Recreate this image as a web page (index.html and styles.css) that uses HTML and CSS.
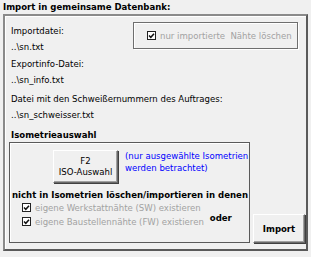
FILE: index.html
```html
<!DOCTYPE html>
<html>
<head>
<meta charset="utf-8">
<link rel="stylesheet" href="styles.css">
</head>
<body>
<div class="title">Import in gemeinsame Datenbank:</div>
<div class="frame">
  <div class="files">
    <div class="grp g1">
      <div class="pair"><div class="ln">Importdatei:</div><div class="ln">..\sn.txt</div></div>
      <div class="optbox">
        <div class="chk">
          <svg class="box" width="9" height="9" viewBox="0 0 9 9"><rect x="0.5" y="0.5" width="8" height="8" fill="#fff" stroke="#222"/><polyline points="2,4.5 3.8,6.3 7,2.8" fill="none" stroke="#111" stroke-width="1.5"/></svg>
          <span class="dis">nur importierte&nbsp; Nähte löschen</span>
        </div>
      </div>
    </div>
    <div class="grp g2"><div class="ln">Exportinfo-Datei:</div><div class="ln">..\sn_info.txt</div></div>
    <div class="grp g3"><div class="ln">Datei mit den Schweißernummern des Auftrages:</div><div class="ln">..\sn_schweisser.txt</div></div>
  </div>
  <div class="sec">Isometrieauswahl</div>
  <div class="bottom">
    <div class="iso">
      <div class="isorow">
        <div class="btn f2">F2<br>ISO-Auswahl</div>
        <div class="hint">(nur ausgewählte Isometrien<br>werden betrachtet)</div>
      </div>
      <div class="nicht">nicht in Isometrien löschen/importieren in denen</div>
      <div class="chkrow">
        <div class="chks">
          <div class="chk">
            <svg class="box" width="9" height="9" viewBox="0 0 9 9"><rect x="0.5" y="0.5" width="8" height="8" fill="#fff" stroke="#222"/><polyline points="2,4.5 3.8,6.3 7,2.8" fill="none" stroke="#111" stroke-width="1.5"/></svg>
            <span class="dis">eigene Werkstattnähte (SW) existieren</span>
          </div>
          <div class="chk">
            <svg class="box" width="9" height="9" viewBox="0 0 9 9"><rect x="0.5" y="0.5" width="8" height="8" fill="#fff" stroke="#222"/><polyline points="2,4.5 3.8,6.3 7,2.8" fill="none" stroke="#111" stroke-width="1.5"/></svg>
            <span class="dis">eigene Baustellennähte (FW) existieren</span>
          </div>
        </div>
        <div class="oder">oder</div>
      </div>
    </div>
    <div class="side"><div class="btn imp">Import</div></div>
  </div>
</div>
</body>
</html>
```
FILE: styles.css
```css
html, body {
  margin: 0;
  padding: 0;
  background: #f0f0f0;
}
body {
  width: 311px;
  height: 257px;
  overflow: hidden;
  font-family: "DejaVu Sans Condensed", "DejaVu Sans", sans-serif;
  font-size: 9.5px;
  color: #000;
}
.title {
  font-weight: bold;
  line-height: 14px;
  padding-left: 3px;
}
.frame {
  margin-left: 3px;
  width: 301px;
  height: 233px;
  border: 2px solid #6a6a6a;
  border-color: #8a8a8a #5a5a5a #5a5a5a #8a8a8a;
  box-shadow: inset 1px 1px 0 #fff;
  display: flex;
  flex-direction: column;
}
.files {
  padding: 7px 0 0 6px;
}
.g1 {
  display: flex;
  align-items: flex-start;
}
.ln {
  line-height: 16px;
  white-space: nowrap;
}
.g2 { margin-top: 1px; }
.g3 { margin-top: 3px; }
.optbox {
  margin: -1px 8px 0 auto;
  width: 150px;
  height: 25px;
  padding-left: 13px;
  border: 1px solid #6e6e6e;
  box-shadow: inset 1px 1px 0 #fff, 1px 1px 0 #fff;
  display: flex;
  align-items: center;
}
.chk {
  display: flex;
  align-items: center;
  gap: 4px;
  line-height: 13px;
  white-space: nowrap;
}
.box { flex: none; }
.dis {
  color: #a2a2a2;
}
.sec {
  font-weight: bold;
  line-height: 14px;
  padding-left: 6px;
  margin-top: 5px;
}
.bottom {
  display: flex;
  align-items: flex-end;
  margin-left: 4px;
}
.iso {
  width: 239px;
  height: 99px;
  border: 1px solid #5a5a5a;
  box-shadow: inset 1px 1px 0 #fff;
}
.isorow {
  display: flex;
  align-items: flex-start;
  padding: 7px 0 0 43px;
  gap: 7px;
}
.btn {
  box-sizing: border-box;
  background: #f0f0f0;
  border: 1px solid;
  border-color: #fff #6a6a6a #6a6a6a #fff;
  box-shadow: inset -1px -1px 0 #a0a0a0, 1px 1px 0 #404040;
  text-align: center;
}
.f2 {
  width: 65px;
  height: 33px;
  line-height: 11px;
  padding-top: 4px;
}
.hint {
  color: #0000ff;
  line-height: 12px;
  white-space: nowrap;
}
.nicht {
  font-weight: bold;
  line-height: 13px;
  padding: 5px 0 0 2px;
  white-space: nowrap;
}
.chkrow {
  display: flex;
  align-items: center;
}
.chks {
  padding-left: 12px;
}
.chks .chk {
  line-height: 13.5px;
}
.oder {
  font-weight: bold;
  margin-left: 6px;
  margin-top: 5px;
}
.side {
  margin-left: 3px;
}
.imp {
  width: 52px;
  height: 29px;
  font-weight: bold;
  line-height: 27px;
}
```
